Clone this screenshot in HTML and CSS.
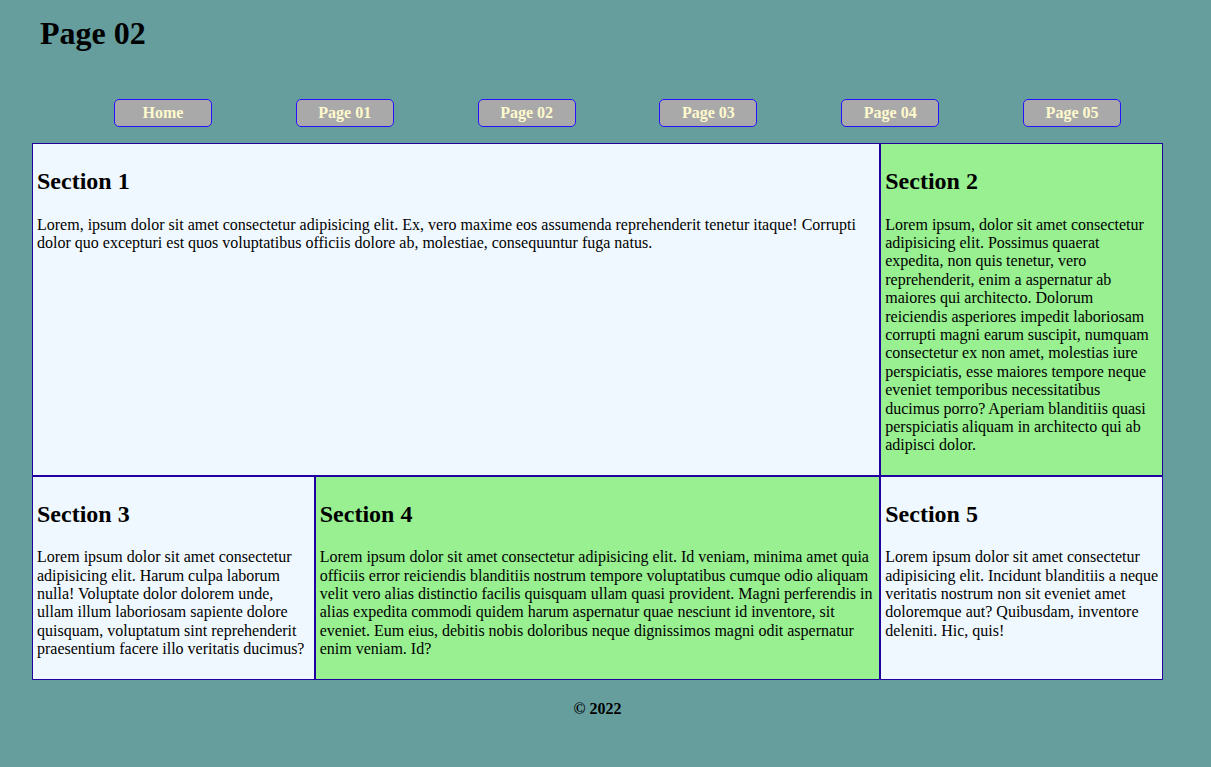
FILE: index.html
```html
<!DOCTYPE html>
<html lang="en">
<head>
<meta charset="utf-8">
<title>Page 02</title>
<link rel="stylesheet" href="styles.css">
</head>
<body>
<div class="page">
  <header class="header">
    <h1 class="title">Page 02</h1>
    <nav>
      <ul class="nav">
        <li><a class="btn" href="#">Home</a></li>
        <li><a class="btn" href="#">Page 01</a></li>
        <li><a class="btn" href="#">Page 02</a></li>
        <li><a class="btn" href="#">Page 03</a></li>
        <li><a class="btn" href="#">Page 04</a></li>
        <li><a class="btn" href="#">Page 05</a></li>
      </ul>
    </nav>
  </header>
  <main class="grid">
    <section class="sec sec1 light">
      <h2>Section 1</h2>
      <p>Lorem, ipsum dolor sit amet consectetur adipisicing elit. Ex, vero maxime eos assumenda reprehenderit tenetur itaque! Corrupti dolor quo excepturi est quos voluptatibus officiis dolore ab, molestiae, consequuntur fuga natus.</p>
    </section>
    <section class="sec green">
      <h2>Section 2</h2>
      <p>Lorem ipsum, dolor sit amet consectetur adipisicing elit. Possimus quaerat expedita, non quis tenetur, vero reprehenderit, enim a aspernatur ab maiores qui architecto. Dolorum reiciendis asperiores impedit laboriosam corrupti magni earum suscipit, numquam consectetur ex non amet, molestias iure perspiciatis, esse maiores tempore neque eveniet temporibus necessitatibus ducimus porro? Aperiam blanditiis quasi perspiciatis aliquam in architecto qui ab adipisci dolor.</p>
    </section>
    <section class="sec light">
      <h2>Section 3</h2>
      <p>Lorem ipsum dolor sit amet consectetur adipisicing elit. Harum culpa laborum nulla! Voluptate dolor dolorem unde, ullam illum laboriosam sapiente dolore quisquam, voluptatum sint reprehenderit praesentium facere illo veritatis ducimus?</p>
    </section>
    <section class="sec green">
      <h2>Section 4</h2>
      <p>Lorem ipsum dolor sit amet consectetur adipisicing elit. Id veniam, minima amet quia officiis error reiciendis blanditiis nostrum tempore voluptatibus cumque odio aliquam velit vero alias distinctio facilis quisquam ullam quasi provident. Magni perferendis in alias expedita commodi quidem harum aspernatur quae nesciunt id inventore, sit eveniet. Eum eius, debitis nobis doloribus neque dignissimos magni odit aspernatur enim veniam. Id?</p>
    </section>
    <section class="sec light">
      <h2>Section 5</h2>
      <p>Lorem ipsum dolor sit amet consectetur adipisicing elit. Incidunt blanditiis a neque veritatis nostrum non sit eveniet amet doloremque aut? Quibusdam, inventore deleniti. Hic, quis!</p>
    </section>
  </main>
  <footer class="footer">© 2022</footer>
</div>
</body>
</html>
```

FILE: styles.css
```css
html, body {
  margin: 0;
  padding: 0;
  background: #669e9e;
}

body {
  font-family: "Liberation Serif", "Times New Roman", serif;
  font-size: 16px;
  color: #000;
}

.page {
  padding: 15px 48px 40px 32px;
}

.title {
  margin: 0 0 0 8px;
  font-size: 32px;
  font-weight: bold;
  line-height: normal;
}

.nav {
  list-style: none;
  margin: 47px 0 16px 0;
  padding: 0 0 0 40px;
  display: flex;
  justify-content: space-around;
}

.btn {
  box-sizing: border-box;
  display: flex;
  align-items: center;
  justify-content: center;
  width: 98px;
  height: 28px;
  background: #a9a9a9;
  border: 1px solid #2b10ff;
  border-radius: 5px;
  color: #fffacd;
  font-weight: bold;
  text-decoration: none;
  font-size: 16px;
}

.grid {
  display: grid;
  grid-template-columns: 1fr 2fr 1fr;
}

.sec {
  border: 1px solid #20009f;
  padding: 0 3.5px 0 4px;
}

.sec1 {
  grid-column: 1 / 3;
}

.light {
  background: #f0f8ff;
}

.green {
  background: #98f090;
}

.sec h2 {
  font-size: 24px;
  margin: 24px 0 20px 0;
  line-height: 1.15;
}

.sec p {
  margin: 0 0 20px 0;
  line-height: 1.15;
}

.footer {
  margin-top: 20px;
  text-align: center;
  font-weight: bold;
}
```
